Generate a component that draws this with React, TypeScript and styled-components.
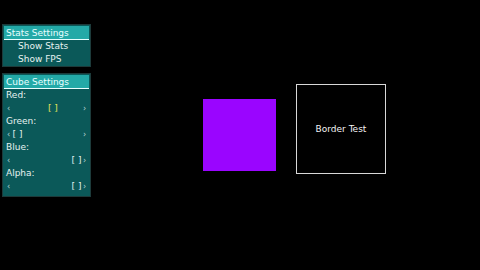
import * as React from 'react';
import styled, { createGlobalStyle } from 'styled-components';

const GlobalStyle = createGlobalStyle`
  body {
    margin: 0;
    background: #000;
    font-family: "DejaVu Sans", "Liberation Sans", sans-serif;
  }
`;

const Screen = styled.div`
  width: 480px;
  height: 270px;
  background: #000;
  display: flex;
  overflow: hidden;
`;

const Sidebar = styled.div`
  display: flex;
  flex-direction: column;
  gap: 6px;
  padding: 24px 0 0 2px;
  width: 89px;
`;

const Panel = styled.div<{ $pad?: number }>`
  background: #0b5959;
  border: 1px solid #1d3b3b;
  padding-bottom: ${(p) => p.$pad ?? 0}px;
`;

const Header = styled.div`
  height: 13px;
  margin: 1px 1px 0;
  background: #23a9a7;
  border-bottom: 1px solid #e8ffff;
  color: #e8ffff;
  font-size: 9px;
  line-height: 14px;
  padding-left: 2px;
`;

const Item = styled.div<{ $indent?: boolean }>`
  height: 13px;
  line-height: 13px;
  font-size: 9px;
  color: #e6f2f0;
  padding-left: ${(p) => (p.$indent ? '15px' : '3px')};
`;

const SliderRow = styled.div`
  height: 13px;
  display: flex;
  align-items: center;
  padding: 0 3px 0 4px;
  font-size: 8px;
  color: #b8d6d4;
`;

const Arrow = styled.span`
  width: 4px;
  font-size: 8px;
  line-height: 13px;
`;

const Track = styled.div`
  flex: 1;
  position: relative;
  height: 13px;
`;

const Thumb = styled.span<{ $active?: boolean }>`
  position: absolute;
  top: 0;
  line-height: 13px;
  font-size: 9px;
  width: 13px;
  white-space: nowrap;
  text-align: center;
  color: ${(p) => (p.$active ? '#e4e35a' : '#e6f2f0')};
`;

const Stage = styled.div`
  flex: 1;
  display: flex;
  align-items: center;
  padding-left: 112px;
  gap: 20px;
`;

const ColorSquare = styled.div`
  width: 73px;
  height: 72px;
  background: #9a05ff;
`;

const BorderBox = styled.div`
  width: 88px;
  height: 88px;
  border: 1px solid #d8d8d8;
  margin-bottom: 13px;
  display: flex;
  align-items: center;
  justify-content: center;
  color: #f4f4f4;
  font-size: 9px;
`;

const sliders = [
  { label: 'Red:', value: 0.6, active: true },
  { label: 'Green:', value: 0, active: false },
  { label: 'Blue:', value: 1, active: false },
  { label: 'Alpha:', value: 1, active: false },
];

const Slider = ({ value, active }: { value: number; active: boolean }) => (
  <SliderRow>
    <Arrow>‹</Arrow>
    <Track>
      <Thumb $active={active} style={{ left: `calc(${value * 100}% - ${value * 13}px)` }}>
        [ ]
      </Thumb>
    </Track>
    <Arrow>›</Arrow>
  </SliderRow>
);

const App = () => {
  return (
    <Screen>
      <GlobalStyle />
      <Sidebar>
        <Panel>
          <Header>Stats Settings</Header>
          <Item $indent>Show Stats</Item>
          <Item $indent>Show FPS</Item>
        </Panel>
        <Panel $pad={3}>
          <Header>Cube Settings</Header>
          {sliders.map((s) => (
            <React.Fragment key={s.label}>
              <Item>{s.label}</Item>
              <Slider value={s.value} active={s.active} />
            </React.Fragment>
          ))}
        </Panel>
      </Sidebar>
      <Stage>
        <ColorSquare />
        <BorderBox>Border Test</BorderBox>
      </Stage>
    </Screen>
  );
};

export default App;
